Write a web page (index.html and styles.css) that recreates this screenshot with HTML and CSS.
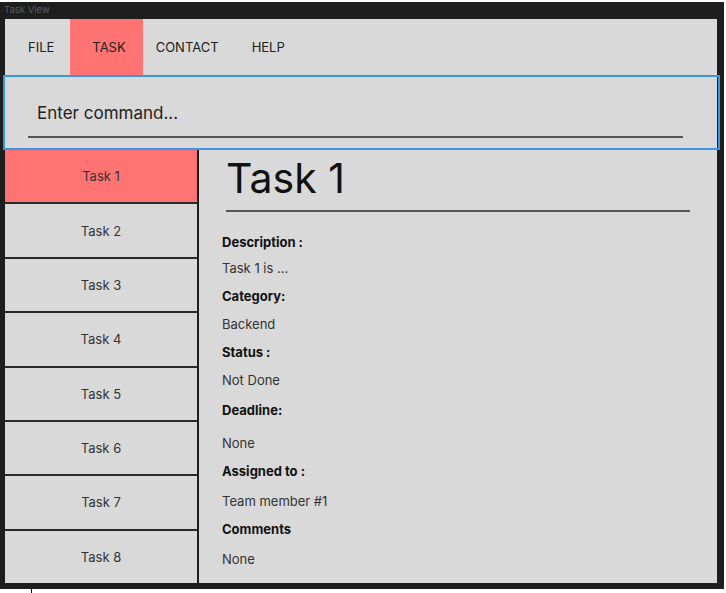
FILE: index.html
```html
<!DOCTYPE html>
<html>
<head>
<meta charset="utf-8">
<link rel="stylesheet" href="styles.css">
</head>
<body>
<div class="frame">
  <div class="titlebar">Task View</div>
  <div class="window">
    <nav class="menu">
      <div class="menu-item m-file">FILE</div>
      <div class="menu-item m-task active">TASK</div>
      <div class="menu-item m-contact">CONTACT</div>
      <div class="menu-item m-help">HELP</div>
    </nav>
    <div class="command">
      <div class="command-text">Enter command...</div>
      <div class="command-line"></div>
    </div>
    <div class="main">
      <ul class="tasks">
        <li class="task selected">Task 1</li>
        <li class="task">Task 2</li>
        <li class="task">Task 3</li>
        <li class="task">Task 4</li>
        <li class="task">Task 5</li>
        <li class="task">Task 6</li>
        <li class="task">Task 7</li>
        <li class="task last">Task 8</li>
      </ul>
      <section class="detail">
        <h1 class="detail-title">Task 1</h1>
        <div class="detail-rule"></div>
        <div class="fields">
          <div class="label first">Description :</div>
          <div class="value tight">Task 1 is ...</div>
          <div class="label">Category:</div>
          <div class="value">Backend</div>
          <div class="label">Status :</div>
          <div class="value">Not Done</div>
          <div class="label loose">Deadline:</div>
          <div class="value wide">None</div>
          <div class="label">Assigned to :</div>
          <div class="value loose">Team member #1</div>
          <div class="label">Comments</div>
          <div class="value loose">None</div>
        </div>
      </section>
    </div>
  </div>
</div>
<div class="stray"></div>
</body>
</html>
```
FILE: styles.css
```css
* { box-sizing: border-box; }
html, body { margin: 0; padding: 0; background: #ffffff; }
body { font-family: Inter, "Noto Sans", sans-serif; color: #222; }

.frame {
  margin-top: 2px;
  width: 724px;
  height: 587px;
  background: #1e1e1e;
  display: flex;
  flex-direction: column;
}
.titlebar {
  height: 17px;
  padding-left: 4px;
  font-size: 9.5px;
  line-height: 16px;
  color: #5d5d5d;
}
.window {
  margin-left: 5px;
  width: 712px;
  height: 564px;
  background: #d9d9d9;
  display: flex;
  flex-direction: column;
}

.menu {
  height: 56px;
  display: flex;
  align-items: stretch;
}
.menu-item {
  font-size: 13px;
  line-height: 56px;
  color: #222;
}
.m-file { padding: 0 16px 0 23px; }
.m-task { padding: 0 17px 0 22px; }
.m-contact { padding: 0 20px 0 13px; }
.m-help { padding: 0 13px 0 13px; }
.menu-item.active { background: #ff7373; }

.command {
  margin-left: -2px;
  margin-right: -3px;
  height: 75px;
  border: 2px solid #3b97e3;
  padding: 24px 0 0 30px;
}
.command-text {
  font-size: 17px;
  line-height: 24px;
  color: #222;
  padding-left: 2px;
}
.command-line {
  margin-top: 11px;
  margin-left: -7px;
  width: 655px;
  height: 2px;
  background: #555;
}

.main {
  flex: 1;
  display: flex;
  min-height: 0;
}
.tasks {
  list-style: none;
  margin: 0;
  padding: 0;
  width: 192px;
  display: flex;
  flex-direction: column;
  border-right: 2px solid #1e1e1e;
  box-sizing: content-box;
}
.task {
  flex: 1;
  display: flex;
  align-items: center;
  justify-content: center;
  font-size: 13px;
  color: #333;
  border-bottom: 2px solid #2a2a2a;
}
.task.last { border-bottom: none; }
.task.selected { background: #ff7373; }

.detail {
  flex: 1;
  padding: 0 0 0 23px;
}
.detail-title {
  margin: 0;
  padding-left: 4px;
  font-size: 41px;
  font-weight: 400;
  line-height: 56px;
  color: #111;
}
.detail-rule {
  margin-top: 4px;
  margin-left: 4px;
  width: 464px;
  height: 2px;
  background: #555;
}
.fields {
  padding-top: 20px;
}
.label, .value {
  font-size: 13px;
  line-height: 20px;
}
.label { font-weight: 700; color: #111; margin-top: 8px; }
.label.first { margin-top: 0; }
.label.loose { margin-top: 10px; }
.value { color: #333; margin-top: 8px; }
.value.tight { margin-top: 6px; }
.value.wide { margin-top: 13px; }
.value.loose { margin-top: 10px; }

.stray {
  margin-left: 31px;
  width: 1px;
  height: 4px;
  background: #111;
}
```
